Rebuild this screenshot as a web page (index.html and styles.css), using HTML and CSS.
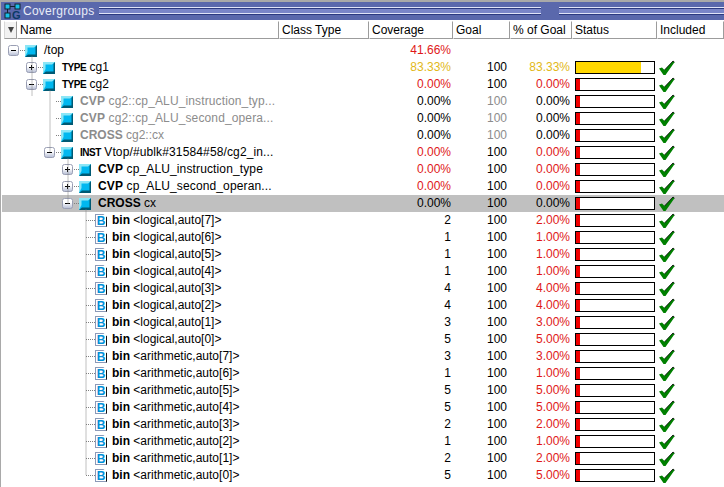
FILE: index.html
```html
<!DOCTYPE html>
<html lang="en">
  <head>
    <meta charset="UTF-8" />
    <title>Covergroups</title>
    <link rel="stylesheet" href="styles.css">
  </head>
  <body>
    <svg class="defs" width="0" height="0">
      <symbol id="cube" viewBox="0 0 12 12">
        <rect width="12" height="12" fill="#00b8f0" />
        <polygon points="0,0 12,0 9,2.5 2.5,2.5 2.5,7 0,12" fill="#8ce6f6" />
        <polygon points="12,0 12,12 0,12 3,9.5 10.5,9.5 10.5,2" fill="#005a74" />
      </symbol>
      <symbol id="plus" viewBox="0 0 11 11">
        <rect x=".5" y=".5" width="10" height="10" rx="2" fill="url(#expGrad)" stroke="#9a9fb4" />
        <path d="M3 5.5h5M5.5 3v5" stroke="#000" />
      </symbol>
      <symbol id="minus" viewBox="0 0 11 11">
        <rect x=".5" y=".5" width="10" height="10" rx="2" fill="url(#expGrad)" stroke="#9a9fb4" />
        <path d="M3 5.5h5" stroke="#000" />
      </symbol>
      <linearGradient id="expGrad" x1="0" y1="0" x2="0" y2="1">
        <stop offset="0.4" stop-color="#ffffff" />
        <stop offset="1" stop-color="#b4bcd4" />
      </linearGradient>
      <symbol id="check" viewBox="0 0 17 16">
        <path d="M1 8.5l3-1 2.5 2.5L15 1l1.5 1.2L7.5 15H5.5z" fill="#008000" />
        <path d="M6.5 10L15 1l1.5 1.2" fill="none" stroke="#000" stroke-width=".8" />
      </symbol>
    </svg>

    <div class="panel">
      <div class="titlebar">
        <svg class="title-icon" width="18" height="17" viewBox="0 0 18 17">
          <rect x="1" y="1" width="5" height="5" fill="#18c0e8" stroke="#10222e" />
          <rect x="11" y="1" width="5" height="5" fill="#18c0e8" stroke="#10222e" />
          <rect x="1" y="10" width="5" height="5" fill="#18c0e8" stroke="#10222e" />
          <path d="M6 3.5h5M3.5 6v4" stroke="#10222e" />
          <text x="8" y="16" class="title-g">G</text>
        </svg>
        <span class="title-text">Covergroups</span>
        <div class="title-lines">
          <div class="grip"></div>
        </div>
      </div>

      <div class="header">
        <div class="menu-btn"><span class="menu-arrow"></span></div>
        <div class="hcell h-name">Name</div>
        <div class="hcell h-class">Class Type</div>
        <div class="hcell h-cov">Coverage</div>
        <div class="hcell h-goal">Goal</div>
        <div class="hcell h-pct">% of Goal</div>
        <div class="hcell h-status">Status</div>
        <div class="hcell h-inc">Included</div>
      </div>

      <div class="tree">
        <svg class="tree-lines" width="724" height="445">
          <path d="M19 8.5h6M31 14.5v39M37 25.5h6M37 42.5h6M49 48.5v62M55 59.5h6M55 76.5h6M55 93.5h6M55 110.5h6M67 116.5v45M73 127.5h6M73 144.5h6M73 161.5h6M85 167.5v266M85 178.5h10M85 195.5h10M85 212.5h10M85 229.5h10M85 246.5h10M85 263.5h10M85 280.5h10M85 297.5h10M85 314.5h10M85 331.5h10M85 348.5h10M85 365.5h10M85 382.5h10M85 399.5h10M85 416.5h10M85 433.5h10" />
        </svg>

        <div class="row">
          <div class="name lv0"><svg class="exp"><use href="#minus" /></svg><svg class="cube"><use href="#cube" /></svg><span class="label">/top</span></div>
          <div></div><div class="num red">41.66%</div><div></div><div></div><div></div><div></div>
        </div>

        <div class="row">
          <div class="name lv1"><svg class="exp"><use href="#plus" /></svg><svg class="cube"><use href="#cube" /></svg><span class="label"><b class="kw">TYPE</b> cg1</span></div>
          <div></div><div class="num yellow">83.33%</div><div class="num goal">100</div><div class="num pct yellow">83.33%</div>
          <div class="status"><div class="bar"><div class="fill fill-mid" style="width: 83.33%"></div></div></div>
          <div class="inc"><svg class="check"><use href="#check" /></svg></div>
        </div>

        <div class="row">
          <div class="name lv1"><svg class="exp"><use href="#minus" /></svg><svg class="cube"><use href="#cube" /></svg><span class="label"><b class="kw">TYPE</b> cg2</span></div>
          <div></div><div class="num red">0.00%</div><div class="num goal">100</div><div class="num pct red">0.00%</div>
          <div class="status"><div class="bar"><div class="fill"></div></div></div>
          <div class="inc"><svg class="check"><use href="#check" /></svg></div>
        </div>

        <div class="row">
          <div class="name lv2 muted wide"><svg class="cube"><use href="#cube" /></svg><span class="label"><b>CVP</b> cg2::cp_ALU_instruction_typ...</span></div>
          <div></div><div class="num">0.00%</div><div class="num goal muted">100</div><div class="num pct">0.00%</div>
          <div class="status"><div class="bar"><div class="fill"></div></div></div>
          <div class="inc"><svg class="check"><use href="#check" /></svg></div>
        </div>

        <div class="row">
          <div class="name lv2 muted wide"><svg class="cube"><use href="#cube" /></svg><span class="label"><b>CVP</b> cg2::cp_ALU_second_opera...</span></div>
          <div></div><div class="num">0.00%</div><div class="num goal muted">100</div><div class="num pct">0.00%</div>
          <div class="status"><div class="bar"><div class="fill"></div></div></div>
          <div class="inc"><svg class="check"><use href="#check" /></svg></div>
        </div>

        <div class="row">
          <div class="name lv2 muted"><svg class="cube"><use href="#cube" /></svg><span class="label"><b>CROSS</b> cg2::cx</span></div>
          <div></div><div class="num">0.00%</div><div class="num goal muted">100</div><div class="num pct">0.00%</div>
          <div class="status"><div class="bar"><div class="fill"></div></div></div>
          <div class="inc"><svg class="check"><use href="#check" /></svg></div>
        </div>

        <div class="row">
          <div class="name lv2x wide"><svg class="exp"><use href="#minus" /></svg><svg class="cube"><use href="#cube" /></svg><span class="label"><b class="kw">INST</b> Vtop/#ublk#31584#58/cg2_in...</span></div>
          <div></div><div class="num red">0.00%</div><div class="num goal">100</div><div class="num pct red">0.00%</div>
          <div class="status"><div class="bar"><div class="fill"></div></div></div>
          <div class="inc"><svg class="check"><use href="#check" /></svg></div>
        </div>

        <div class="row">
          <div class="name lv3 wide"><svg class="exp"><use href="#plus" /></svg><svg class="cube"><use href="#cube" /></svg><span class="label"><b>CVP</b> cp_ALU_instruction_type</span></div>
          <div></div><div class="num red">0.00%</div><div class="num goal">100</div><div class="num pct red">0.00%</div>
          <div class="status"><div class="bar"><div class="fill"></div></div></div>
          <div class="inc"><svg class="check"><use href="#check" /></svg></div>
        </div>

        <div class="row">
          <div class="name lv3 wide"><svg class="exp"><use href="#plus" /></svg><svg class="cube"><use href="#cube" /></svg><span class="label"><b>CVP</b> cp_ALU_second_operan...</span></div>
          <div></div><div class="num red">0.00%</div><div class="num goal">100</div><div class="num pct red">0.00%</div>
          <div class="status"><div class="bar"><div class="fill"></div></div></div>
          <div class="inc"><svg class="check"><use href="#check" /></svg></div>
        </div>

        <div class="row selected">
          <div class="name lv3s"><svg class="exp"><use href="#minus" /></svg><svg class="cube"><use href="#cube" /></svg><span class="label"><b>CROSS</b> cx</span></div>
          <div></div><div class="num">0.00%</div><div class="num goal">100</div><div class="num pct">0.00%</div>
          <div class="status"><div class="bar"><div class="fill"></div></div></div>
          <div class="inc"><svg class="check"><use href="#check" /></svg></div>
        </div>

        <div class="row"><div class="name bin"><span class="doc">B</span><span class="label"><b>bin</b> &lt;logical,auto[7]&gt;</span></div><div></div><div class="num">2</div><div class="num goal">100</div><div class="num pct red">2.00%</div><div class="status"><div class="bar"><div class="fill"></div></div></div><div class="inc"><svg class="check"><use href="#check" /></svg></div></div>
        <div class="row"><div class="name bin"><span class="doc">B</span><span class="label"><b>bin</b> &lt;logical,auto[6]&gt;</span></div><div></div><div class="num">1</div><div class="num goal">100</div><div class="num pct red">1.00%</div><div class="status"><div class="bar"><div class="fill"></div></div></div><div class="inc"><svg class="check"><use href="#check" /></svg></div></div>
        <div class="row"><div class="name bin"><span class="doc">B</span><span class="label"><b>bin</b> &lt;logical,auto[5]&gt;</span></div><div></div><div class="num">1</div><div class="num goal">100</div><div class="num pct red">1.00%</div><div class="status"><div class="bar"><div class="fill"></div></div></div><div class="inc"><svg class="check"><use href="#check" /></svg></div></div>
        <div class="row"><div class="name bin"><span class="doc">B</span><span class="label"><b>bin</b> &lt;logical,auto[4]&gt;</span></div><div></div><div class="num">1</div><div class="num goal">100</div><div class="num pct red">1.00%</div><div class="status"><div class="bar"><div class="fill"></div></div></div><div class="inc"><svg class="check"><use href="#check" /></svg></div></div>
        <div class="row"><div class="name bin"><span class="doc">B</span><span class="label"><b>bin</b> &lt;logical,auto[3]&gt;</span></div><div></div><div class="num">4</div><div class="num goal">100</div><div class="num pct red">4.00%</div><div class="status"><div class="bar"><div class="fill"></div></div></div><div class="inc"><svg class="check"><use href="#check" /></svg></div></div>
        <div class="row"><div class="name bin"><span class="doc">B</span><span class="label"><b>bin</b> &lt;logical,auto[2]&gt;</span></div><div></div><div class="num">4</div><div class="num goal">100</div><div class="num pct red">4.00%</div><div class="status"><div class="bar"><div class="fill"></div></div></div><div class="inc"><svg class="check"><use href="#check" /></svg></div></div>
        <div class="row"><div class="name bin"><span class="doc">B</span><span class="label"><b>bin</b> &lt;logical,auto[1]&gt;</span></div><div></div><div class="num">3</div><div class="num goal">100</div><div class="num pct red">3.00%</div><div class="status"><div class="bar"><div class="fill"></div></div></div><div class="inc"><svg class="check"><use href="#check" /></svg></div></div>
        <div class="row"><div class="name bin"><span class="doc">B</span><span class="label"><b>bin</b> &lt;logical,auto[0]&gt;</span></div><div></div><div class="num">5</div><div class="num goal">100</div><div class="num pct red">5.00%</div><div class="status"><div class="bar"><div class="fill"></div></div></div><div class="inc"><svg class="check"><use href="#check" /></svg></div></div>
        <div class="row"><div class="name bin"><span class="doc">B</span><span class="label"><b>bin</b> &lt;arithmetic,auto[7]&gt;</span></div><div></div><div class="num">3</div><div class="num goal">100</div><div class="num pct red">3.00%</div><div class="status"><div class="bar"><div class="fill"></div></div></div><div class="inc"><svg class="check"><use href="#check" /></svg></div></div>
        <div class="row"><div class="name bin"><span class="doc">B</span><span class="label"><b>bin</b> &lt;arithmetic,auto[6]&gt;</span></div><div></div><div class="num">1</div><div class="num goal">100</div><div class="num pct red">1.00%</div><div class="status"><div class="bar"><div class="fill"></div></div></div><div class="inc"><svg class="check"><use href="#check" /></svg></div></div>
        <div class="row"><div class="name bin"><span class="doc">B</span><span class="label"><b>bin</b> &lt;arithmetic,auto[5]&gt;</span></div><div></div><div class="num">5</div><div class="num goal">100</div><div class="num pct red">5.00%</div><div class="status"><div class="bar"><div class="fill"></div></div></div><div class="inc"><svg class="check"><use href="#check" /></svg></div></div>
        <div class="row"><div class="name bin"><span class="doc">B</span><span class="label"><b>bin</b> &lt;arithmetic,auto[4]&gt;</span></div><div></div><div class="num">5</div><div class="num goal">100</div><div class="num pct red">5.00%</div><div class="status"><div class="bar"><div class="fill"></div></div></div><div class="inc"><svg class="check"><use href="#check" /></svg></div></div>
        <div class="row"><div class="name bin"><span class="doc">B</span><span class="label"><b>bin</b> &lt;arithmetic,auto[3]&gt;</span></div><div></div><div class="num">2</div><div class="num goal">100</div><div class="num pct red">2.00%</div><div class="status"><div class="bar"><div class="fill"></div></div></div><div class="inc"><svg class="check"><use href="#check" /></svg></div></div>
        <div class="row"><div class="name bin"><span class="doc">B</span><span class="label"><b>bin</b> &lt;arithmetic,auto[2]&gt;</span></div><div></div><div class="num">1</div><div class="num goal">100</div><div class="num pct red">1.00%</div><div class="status"><div class="bar"><div class="fill"></div></div></div><div class="inc"><svg class="check"><use href="#check" /></svg></div></div>
        <div class="row"><div class="name bin"><span class="doc">B</span><span class="label"><b>bin</b> &lt;arithmetic,auto[1]&gt;</span></div><div></div><div class="num">2</div><div class="num goal">100</div><div class="num pct red">2.00%</div><div class="status"><div class="bar"><div class="fill"></div></div></div><div class="inc"><svg class="check"><use href="#check" /></svg></div></div>
        <div class="row"><div class="name bin"><span class="doc">B</span><span class="label"><b>bin</b> &lt;arithmetic,auto[0]&gt;</span></div><div></div><div class="num">5</div><div class="num goal">100</div><div class="num pct red">5.00%</div><div class="status"><div class="bar"><div class="fill"></div></div></div><div class="inc"><svg class="check"><use href="#check" /></svg></div></div>
      </div>
    </div>
  </body>
</html>
```

FILE: styles.css
```css
body {
  font-family: "Liberation Sans", Arial, sans-serif;
  font-size: 12px;
  color: #000;
  background-color: #fff;
  margin: 0;
  padding: 0;
  height: 487px;
  overflow: hidden;
}

.defs {
  position: absolute;
}

.panel {
  border-top: 2px solid #a9a9a9;
  border-left: 1px solid #a9a9a9;
  height: 485px;
  overflow: hidden;
}

/* title bar */
.titlebar {
  display: flex;
  align-items: center;
  height: 18px;
  background-color: #5a68ac;
  color: #e8ecf8;
  padding-left: 3px;
}

.title-icon {
  flex: none;
  margin-right: 1px;
}

.title-g {
  font-family: "Liberation Sans", Arial, sans-serif;
  font-weight: bold;
  font-size: 11px;
  fill: #0a3a66;
}

.title-text {
  font-size: 12px;
  letter-spacing: 0.25px;
  width: 76px;
  flex: none;
}

.title-lines {
  flex: 1;
  height: 8px;
  display: flex;
  align-items: center;
  background: linear-gradient(
    to bottom,
    #e0e4f8 0,
    #e0e4f8 1px,
    #2c3a80 1px,
    #2c3a80 2px,
    #7a86c8 2px,
    #7a86c8 6px,
    #e0e4f8 6px,
    #e0e4f8 7px,
    #2c3a80 7px,
    #2c3a80 8px
  );
}

.grip {
  width: 22px;
  height: 18px;
  margin-left: 440px;
  flex: none;
  background-color: #5a68ac;
  background-image: radial-gradient(#fff 0.6px, transparent 0.7px);
  background-size: 2px 2px;
  background-position: 2px 5px;
  background-clip: content-box;
  padding: 5px 2px;
  box-sizing: border-box;
}

/* column headers */
.header {
  display: grid;
  grid-template-columns: 16px 262px 90px 84px 57px 62px 85px 67px;
  height: 18px;
  margin-top: 1px;
}

.menu-btn,
.hcell {
  border-top: 1px solid #fff;
  border-left: 1px solid #fff;
  border-right: 1px solid #9c9c9c;
  border-bottom: 1px solid #9c9c9c;
  background-color: #fff;
  line-height: 16px;
  padding-left: 2px;
  box-sizing: border-box;
  white-space: nowrap;
  overflow: hidden;
}

.menu-btn {
  background-color: #f2f2f2;
  display: flex;
  align-items: center;
  justify-content: center;
  padding-left: 0;
  margin-left: 3px;
  border-left-color: #d8d8d8;
}

.menu-arrow {
  width: 0;
  height: 0;
  border-left: 3px solid transparent;
  border-right: 3px solid transparent;
  border-top: 6px solid #444;
}

/* tree rows */
.tree {
  position: relative;
  padding-top: 3px;
}

.tree-lines {
  position: absolute;
  left: 0;
  top: 3px;
  pointer-events: none;
}

.tree-lines path {
  fill: none;
  stroke: #808080;
  stroke-dasharray: 1 1;
}

.row {
  display: grid;
  grid-template-columns: 278px 90px 84px 57px 62px 85px 67px;
  height: 17px;
  line-height: 17px;
}

.row.selected {
  background-color: #c0c0c0;
  margin-left: 1px;
  grid-template-columns: 277px 90px 84px 57px 62px 85px 67px;
}

.name {
  display: flex;
  align-items: center;
  white-space: nowrap;
  overflow: hidden;
}

.lv0 { padding-left: 7px; }
.lv1 { padding-left: 25px; }
.lv2 { padding-left: 60px; }
.lv2x { padding-left: 43px; }
.lv3 { padding-left: 61px; }
.lv3s { padding-left: 60px; }
.bin { padding-left: 94px; }

.wide {
  letter-spacing: 0.13px;
}

.exp {
  width: 11px;
  height: 11px;
  margin-right: 6px;
  flex: none;
}

.cube {
  width: 12px;
  height: 12px;
  margin-right: 7px;
  flex: none;
}

.doc {
  width: 12px;
  height: 13px;
  margin-right: 5px;
  flex: none;
  box-sizing: border-box;
  border: 1px solid #8c9ab8;
  border-right-color: #111;
  background-color: #fff;
  color: #0090d8;
  font-weight: bold;
  font-size: 12px;
  line-height: 12px;
  text-align: center;
  clip-path: polygon(0 0, 70% 0, 100% 25%, 100% 100%, 0 100%);
}

.kw {
  font-size: 10px;
  letter-spacing: -0.5px;
}

.muted {
  color: #8c8c8c;
}

.num {
  text-align: right;
  padding-right: 2px;
}

.goal {
  padding-right: 3px;
}

.red {
  color: #e01818;
}

.yellow {
  color: #e2b818;
}

.status {
  display: flex;
  align-items: center;
  padding-left: 3px;
}

.bar {
  width: 80px;
  height: 13px;
  border: 1px solid #000;
  background-color: #fff;
  box-sizing: border-box;
}

.fill {
  width: 4px;
  height: 100%;
  background-color: #f00000;
}

.fill-mid {
  background-color: #ffd700;
}

.inc {
  display: flex;
  align-items: center;
  padding-left: 1px;
}

.check {
  width: 17px;
  height: 16px;
}
```
